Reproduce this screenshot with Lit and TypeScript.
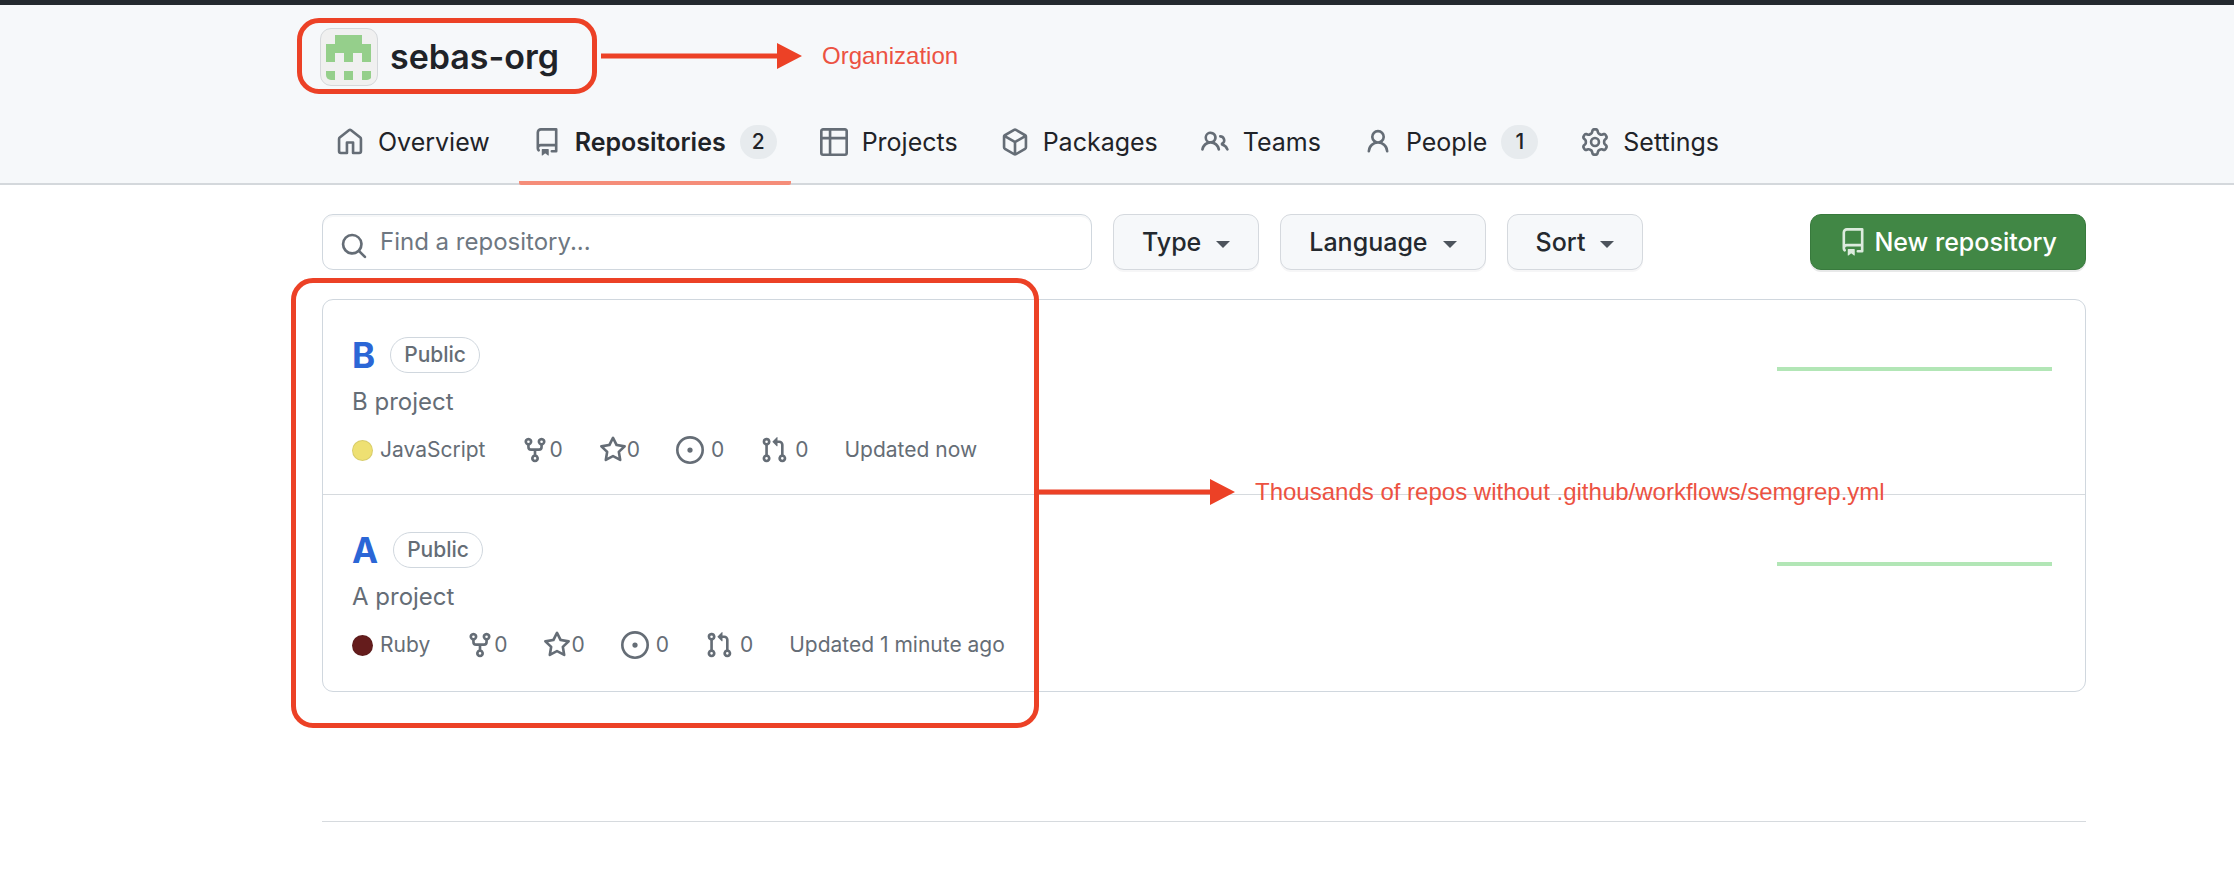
import { LitElement, html, css, svg } from "lit";
import { customElement, property } from "lit/decorators.js";

const ICONS: Record<string, string> = {
  home: "M6.906.664a1.749 1.749 0 0 1 2.187 0l5.25 4.2c.415.332.657.835.657 1.367v7.019A1.75 1.75 0 0 1 13.25 15h-3.5a.75.75 0 0 1-.75-.75V9H7v5.25a.75.75 0 0 1-.75.75h-3.5A1.75 1.75 0 0 1 1 13.25V6.23c0-.531.242-1.034.657-1.366l5.25-4.2Zm1.25 1.171a.25.25 0 0 0-.312 0l-5.25 4.2a.25.25 0 0 0-.094.196v7.019c0 .138.112.25.25.25H5.5V8.25a.75.75 0 0 1 .75-.75h3.5a.75.75 0 0 1 .75.75v5.25h2.75a.25.25 0 0 0 .25-.25V6.23a.25.25 0 0 0-.094-.195Z",
  repo: "M2 2.5A2.5 2.5 0 0 1 4.5 0h8.75a.75.75 0 0 1 .75.75v12.5a.75.75 0 0 1-.75.75h-2.5a.75.75 0 0 1 0-1.5h1.75v-2h-8a1 1 0 0 0-.714 1.7.75.75 0 1 1-1.072 1.05A2.495 2.495 0 0 1 2 11.5Zm10.5-1h-8a1 1 0 0 0-1 1v6.708A2.486 2.486 0 0 1 4.5 9h8ZM5 12.25a.25.25 0 0 1 .25-.25h3.5a.25.25 0 0 1 .25.25v3.25a.25.25 0 0 1-.4.2l-1.45-1.087a.249.249 0 0 0-.3 0L5.4 15.7a.25.25 0 0 1-.4-.2Z",
  table: "M0 1.75C0 .784.784 0 1.75 0h12.5C15.216 0 16 .784 16 1.75v12.5A1.75 1.75 0 0 1 14.25 16H1.75A1.75 1.75 0 0 1 0 14.25ZM6.5 6.5v8h7.75a.25.25 0 0 0 .25-.25V6.5Zm8-1.5V1.75a.25.25 0 0 0-.25-.25H6.5V5Zm-13 1.5v7.75c0 .138.112.25.25.25H5v-8ZM5 5V1.5H1.75a.25.25 0 0 0-.25.25V5Z",
  package: "m8.878.392 5.25 3.045c.54.314.872.89.872 1.514v6.098a1.75 1.75 0 0 1-.872 1.514l-5.25 3.045a1.75 1.75 0 0 1-1.756 0l-5.25-3.045A1.75 1.75 0 0 1 1 11.049V4.951c0-.624.332-1.201.872-1.514L7.122.392a1.75 1.75 0 0 1 1.756 0ZM7.875 1.69l-4.63 2.685L8 7.133l4.755-2.758-4.63-2.685a.248.248 0 0 0-.25 0ZM2.5 5.677v5.372c0 .09.047.171.125.216l4.625 2.683V8.432Zm6.25 8.271 4.625-2.683a.25.25 0 0 0 .125-.216V5.677L8.75 8.432Z",
  people: "M2 5.5a3.5 3.5 0 1 1 5.898 2.549 5.508 5.508 0 0 1 3.034 4.084.75.75 0 1 1-1.482.235 4 4 0 0 0-7.9 0 .75.75 0 0 1-1.482-.236A5.507 5.507 0 0 1 3.102 8.05 3.493 3.493 0 0 1 2 5.5ZM11 4a3.001 3.001 0 0 1 2.22 5.018 5.01 5.01 0 0 1 2.56 3.012.749.749 0 0 1-.885.954.752.752 0 0 1-.549-.514 3.507 3.507 0 0 0-2.522-2.372.75.75 0 0 1-.574-.73v-.352a.75.75 0 0 1 .416-.672A1.5 1.5 0 0 0 11 5.5.75.75 0 0 1 11 4Zm-5.5-.5a2 2 0 1 0-.001 3.999A2 2 0 0 0 5.5 3.5Z",
  person: "M10.561 8.073a6.005 6.005 0 0 1 3.432 5.142.75.75 0 1 1-1.498.07 4.5 4.5 0 0 0-8.99 0 .75.75 0 0 1-1.498-.07 6.004 6.004 0 0 1 3.431-5.142 3.999 3.999 0 1 1 5.123 0ZM10.5 5a2.5 2.5 0 1 0-5 0 2.5 2.5 0 0 0 5 0Z",
  gear: "M8 0a8.2 8.2 0 0 1 .701.031C9.444.095 9.99.645 10.16 1.29l.288 1.107c.018.066.079.158.212.224.231.114.454.243.668.386.123.082.233.09.299.071l1.103-.303c.644-.176 1.392.021 1.82.63.27.385.506.792.704 1.218.315.675.111 1.422-.364 1.891l-.814.806c-.049.048-.098.147-.088.294.016.257.016.515 0 .772-.01.147.038.246.088.294l.814.806c.475.469.679 1.216.364 1.891a7.977 7.977 0 0 1-.704 1.217c-.428.61-1.176.807-1.82.63l-1.102-.302c-.067-.019-.177-.011-.3.071a5.909 5.909 0 0 1-.668.386c-.133.066-.194.158-.211.224l-.29 1.106c-.168.646-.715 1.196-1.458 1.26a8.006 8.006 0 0 1-1.402 0c-.743-.064-1.289-.614-1.458-1.26l-.289-1.106c-.018-.066-.079-.158-.212-.224a5.738 5.738 0 0 1-.668-.386c-.123-.082-.233-.09-.299-.071l-1.103.303c-.644.176-1.392-.021-1.82-.63a8.12 8.12 0 0 1-.704-1.218c-.315-.675-.111-1.422.363-1.891l.815-.806c.05-.048.098-.147.088-.294a6.214 6.214 0 0 1 0-.772c.01-.147-.038-.246-.088-.294l-.815-.806C.635 6.045.431 5.298.746 4.623a7.92 7.92 0 0 1 .704-1.217c.428-.61 1.176-.807 1.82-.63l1.102.302c.067.019.177.011.3-.071.214-.143.437-.272.668-.386.133-.066.194-.158.211-.224l.29-1.106C6.009.645 6.556.095 7.299.03 7.53.01 7.764 0 8 0Zm-.571 1.525c-.036.003-.108.036-.137.146l-.289 1.105c-.147.561-.549.967-.998 1.189-.173.086-.34.183-.5.29-.417.278-.97.423-1.529.27l-1.103-.303c-.109-.03-.175.016-.195.045-.22.312-.412.644-.573.99-.014.031-.021.11.059.19l.815.806c.411.406.562.957.53 1.456a4.709 4.709 0 0 0 0 .582c.032.499-.119 1.05-.53 1.456l-.815.806c-.081.08-.073.159-.059.19.162.346.353.677.573.989.02.03.085.076.195.046l1.102-.303c.56-.153 1.113-.008 1.53.27.161.107.328.204.501.29.447.222.85.629.997 1.189l.289 1.105c.029.109.101.143.137.146a6.6 6.6 0 0 0 1.142 0c.036-.003.108-.036.137-.146l.289-1.105c.147-.561.549-.967.998-1.189.173-.086.34-.183.5-.29.417-.278.97-.423 1.529-.27l1.103.303c.109.029.175-.016.195-.045.22-.313.411-.644.573-.99.014-.031.021-.11-.059-.19l-.815-.806c-.411-.406-.562-.957-.53-1.456a4.709 4.709 0 0 0 0-.582c-.032-.499.119-1.05.53-1.456l.815-.806c.081-.08.073-.159.059-.19a6.464 6.464 0 0 0-.573-.989c-.02-.03-.085-.076-.195-.046l-1.102.303c-.56.153-1.113.008-1.53-.27a4.44 4.44 0 0 0-.501-.29c-.447-.222-.85-.629-.997-1.189l-.289-1.105c-.029-.11-.101-.143-.137-.146a6.6 6.6 0 0 0-1.142 0ZM11 8a3 3 0 1 1-6 0 3 3 0 0 1 6 0ZM9.5 8a1.5 1.5 0 1 0-3.001.001A1.5 1.5 0 0 0 9.5 8Z",
  search: "M10.68 11.74a6 6 0 0 1-7.922-8.982 6 6 0 0 1 8.982 7.922l3.04 3.04a.749.749 0 0 1-.326 1.275.749.749 0 0 1-.734-.215ZM11.5 7a4.499 4.499 0 1 0-8.997 0A4.499 4.499 0 0 0 11.5 7Z",
  fork: "M5 5.372v.878c0 .414.336.75.75.75h4.5a.75.75 0 0 0 .75-.75v-.878a2.25 2.25 0 1 1 1.5 0v.878a2.25 2.25 0 0 1-2.25 2.25h-1.5v2.128a2.251 2.251 0 1 1-1.5 0V8.5h-1.5A2.25 2.25 0 0 1 3.5 6.25v-.878a2.25 2.25 0 1 1 1.5 0ZM5 3.25a.75.75 0 1 0-1.5 0 .75.75 0 0 0 1.5 0Zm6.75.75a.75.75 0 1 0 0-1.5.75.75 0 0 0 0 1.5Zm-3 8.75a.75.75 0 1 0-1.5 0 .75.75 0 0 0 1.5 0Z",
  star: "M8 .25a.75.75 0 0 1 .673.418l1.882 3.815 4.21.612a.75.75 0 0 1 .416 1.279l-3.046 2.97.719 4.192a.751.751 0 0 1-1.088.791L8 12.347l-3.766 1.98a.75.75 0 0 1-1.088-.79l.72-4.194L.818 6.374a.75.75 0 0 1 .416-1.28l4.21-.611L7.327.668A.75.75 0 0 1 8 .25Zm0 2.445L6.615 5.5a.75.75 0 0 1-.564.41l-3.097.45 2.24 2.184a.75.75 0 0 1 .216.664l-.528 3.084 2.769-1.456a.75.75 0 0 1 .698 0l2.77 1.456-.53-3.084a.75.75 0 0 1 .216-.664l2.24-2.183-3.096-.45a.75.75 0 0 1-.564-.41L8 2.694Z",
  issue: "M8 9.5a1.5 1.5 0 1 0 0-3 1.5 1.5 0 0 0 0 3ZM8 0a8 8 0 1 1 0 16A8 8 0 0 1 8 0ZM1.5 8a6.5 6.5 0 1 0 13 0 6.5 6.5 0 0 0-13 0Z",
  pull: "M1.5 3.25a2.25 2.25 0 1 1 3 2.122v5.256a2.251 2.251 0 1 1-1.5 0V5.372A2.25 2.25 0 0 1 1.5 3.25Zm5.677-.177L9.573.677A.25.25 0 0 1 10 .854V2.5h1A2.5 2.5 0 0 1 13.5 5v5.628a2.251 2.251 0 1 1-1.5 0V5a1 1 0 0 0-1-1h-1v1.646a.25.25 0 0 1-.427.177L7.177 3.427a.25.25 0 0 1 0-.354ZM3.75 2.5a.75.75 0 1 0 0 1.5.75.75 0 0 0 0-1.5Zm0 9.5a.75.75 0 1 0 0 1.5.75.75 0 0 0 0-1.5Zm8.25.75a.75.75 0 1 0 1.5 0 .75.75 0 0 0-1.5 0Z",
};

const icon = (name: string) => html`<svg class="icon" viewBox="0 0 16 16" aria-hidden="true">
  <path fill-rule="evenodd" d=${ICONS[name]}></path>
</svg>`;

interface Tab {
  icon: string;
  label: string;
  count?: number;
  current?: boolean;
}

interface Repo {
  name: string;
  description: string;
  language: string;
  color: string;
  updated: string;
}

const TABS: Tab[] = [
  { icon: "home", label: "Overview" },
  { icon: "repo", label: "Repositories", count: 2, current: true },
  { icon: "table", label: "Projects" },
  { icon: "package", label: "Packages" },
  { icon: "people", label: "Teams" },
  { icon: "person", label: "People", count: 1 },
  { icon: "gear", label: "Settings" },
];

const REPOS: Repo[] = [
  { name: "B", description: "B project", language: "JavaScript", color: "#eee072", updated: "Updated now" },
  { name: "A", description: "A project", language: "Ruby", color: "#651c1c", updated: "Updated 1 minute ago" },
];

const AVATAR_CELLS = [
  [1, 0], [2, 0], [3, 0],
  [0, 1], [1, 1], [2, 1], [3, 1], [4, 1],
  [0, 2], [2, 2], [4, 2],
  [0, 4], [2, 4], [4, 4],
];

const base = css`
  * { box-sizing: border-box; }
  a { color: inherit; text-decoration: none; }
  .icon { width: 28px; height: 28px; flex: none; display: block; fill: currentColor; }
`;

@customElement("org-header")
class OrgHeader extends LitElement {
  static styles = [base, css`
    :host {
      display: block;
      background: #f6f8fa;
      border-top: 5px solid #24292f;
      border-bottom: 2px solid #d4d8dc;
      padding: 23px 148px 0 322px;
    }
    .org { display: flex; align-items: center; gap: 12px; margin-left: -2px; }
    .avatar {
      width: 58px;
      height: 58px;
      padding: 5px;
      border: 1px solid #d5d8db;
      border-radius: 11px;
      background: #f0f0f0;
      fill: #95cf8b;
    }
    h1 { margin: 0; font-size: 34px; line-height: 44px; font-weight: 600; color: #1f2328; }
    .tabs { display: flex; gap: 15px; margin: 18px 0 -2px; }
    .tab {
      display: flex;
      align-items: center;
      gap: 14px;
      padding: 21px 14px 22px;
      border-bottom: 4px solid transparent;
      border-radius: 2px;
      font-size: 25px;
      line-height: 34px;
      color: #1f2328;
    }
    .tab .icon { color: #656d76; }
    .current { font-weight: 600; border-bottom-color: #f58d79; }
    .count {
      min-width: 37px;
      height: 34px;
      padding: 0 11px;
      border-radius: 18px;
      background: #e7ebee;
      font-size: 21px;
      font-weight: 500;
      text-align: center;
    }
  `];

  render() {
    return html`
      <div class="org">
        <svg class="avatar" viewBox="0 0 46 46" aria-hidden="true" shape-rendering="crispEdges">
          ${AVATAR_CELLS.map(([x, y]) => svg`<rect x=${x * 9} y=${y * 9 + 1} width="9" height="9"></rect>`)}
        </svg>
        <h1>sebas-org</h1>
      </div>
      <nav class="tabs" aria-label="Organization">
        ${TABS.map((t) => html`
          <a class="tab ${t.current ? "current" : ""}" href="#">
            ${icon(t.icon)}<span>${t.label}</span>
            ${t.count ? html`<span class="count">${t.count}</span>` : ""}
          </a>`)}
      </nav>
    `;
  }
}

@customElement("repo-toolbar")
class RepoToolbar extends LitElement {
  static styles = [base, css`
    :host { display: flex; gap: 21px; }
    .search {
      flex: 0 1 770px;
      min-width: 0;
      display: flex;
      align-items: center;
      gap: 12px;
      height: 56px;
      padding: 0 17px;
      border: 1px solid #d0d7de;
      border-radius: 11px;
      box-shadow: inset 0 2px 0 rgba(208, 215, 222, 0.2);
      color: #656d76;
    }
    .glass { padding-top: 8px; }
    input {
      flex: 1;
      min-width: 0;
      padding: 0;
      border: 0;
      outline: 0;
      background: none;
      font: inherit;
      color: #1f2328;
    }
    input::placeholder { color: #6e7781; opacity: 1; }
    button {
      display: flex;
      align-items: center;
      gap: 15px;
      height: 56px;
      padding: 0 28px;
      border: 1px solid #d5d9de;
      border-radius: 11px;
      background: #f6f8fa;
      box-shadow: 0 2px 0 rgba(31, 35, 40, 0.04);
      font: inherit;
      font-size: 25px;
      font-weight: 500;
      white-space: nowrap;
      color: #24292f;
    }
    .caret {
      border: 7px solid transparent;
      border-top-color: #4d545c;
      border-bottom: 0;
      margin-top: 4px;
    }
    .primary {
      margin-left: auto;
      gap: 7px;
      background: #418745;
      border-color: #387a3d;
      box-shadow: 0 2px 0 rgba(31, 35, 40, 0.1);
      color: #ffffff;
    }
    .primary .icon { color: #dcebdd; }
  `];

  render() {
    return html`
      <div class="search">
        <label class="glass" for="find" aria-label="Find a repository">${icon("search")}</label>
        <input id="find" type="text" placeholder="Find a repository..." />
      </div>
      ${["Type", "Language", "Sort"].map((l) => html`
        <button type="button" aria-haspopup="menu">${l}<span class="caret"></span></button>`)}
      <button type="button" class="primary">${icon("repo")}New repository</button>
    `;
  }
}

@customElement("repo-row")
class RepoRow extends LitElement {
  @property({ attribute: false }) repo!: Repo;

  static styles = [base, css`
    :host {
      display: flex;
      justify-content: space-between;
      padding: 37px 33px 30px 29px;
      color: #656d76;
    }
    .head { display: flex; align-items: center; gap: 15px; height: 36px; }
    h3 { margin: 0; font-size: 35px; line-height: 36px; font-weight: 700; color: #2b66d6; }
    .pill {
      padding: 0 13px;
      border: 1px solid #d0d7de;
      border-radius: 18px;
      font-size: 21px;
      line-height: 34px;
      font-weight: 500;
    }
    p { margin: 13px 0 18px; line-height: 32px; }
    .meta { display: flex; align-items: center; gap: 36px; font-size: 21px; line-height: 28px; }
    .stat, .language { display: flex; align-items: center; white-space: nowrap; }
    .language { gap: 7px; }
    .wide { gap: 7px; }
    .dot { width: 21px; height: 21px; border-radius: 50%; border: 1px solid rgba(31, 35, 40, 0.1); }
    .spark { flex: none; width: 275px; height: 4px; margin-top: 30px; background: #b2e6b6; }
  `];

  render() {
    const r = this.repo;
    return html`
      <div>
        <div class="head"><h3><a href="#">${r.name}</a></h3><span class="pill">Public</span></div>
        <p>${r.description}</p>
        <div class="meta">
          <span class="language"><span class="dot" style="background:${r.color}"></span>${r.language}</span>
          <a class="stat" href="#">${icon("fork")}0</a>
          <a class="stat" href="#">${icon("star")}0</a>
          <a class="stat wide" href="#">${icon("issue")}0</a>
          <a class="stat wide" href="#">${icon("pull")}0</a>
          <span>${r.updated}</span>
        </div>
      </div>
      <div class="spark"></div>
    `;
  }
}

@customElement("callout-note")
class CalloutNote extends LitElement {
  @property() text = "";

  static styles = [base, css`
    :host {
      display: flex;
      align-items: center;
      font: 24px/28px "Liberation Sans", Arial, sans-serif;
      color: #ec5242;
      white-space: nowrap;
    }
    .arrow { display: block; width: 201px; height: 26px; margin-right: 20px; fill: #ec4126; }
  `];

  render() {
    return html`
      <svg class="arrow" viewBox="0 0 201 26" aria-hidden="true">
        <path d="M0 10.500H176V0L201 13L176 26V15.500H0Z"></path>
      </svg>
      <span>${this.text}</span>
    `;
  }
}

@customElement("app-root")
class AppRoot extends LitElement {
  static styles = [base, css`
    :host {
      display: block;
      position: relative;
      min-height: 100vh;
      background: #ffffff;
      font: 24px/32px Inter, "Liberation Sans", sans-serif;
      color: #1f2328;
    }
    main { padding: 29px 148px 0 322px; }
    .list { margin-top: 29px; padding-bottom: 2px; border: 1px solid #d0d7de; border-radius: 11px; }
    repo-row + repo-row { border-top: 1px solid #d6dade; }
    hr { margin: 129px 0 0; border: 0; border-top: 1px solid #d6dade; }
    .frame { position: absolute; border: 5px solid #ec4126; border-radius: 22px; pointer-events: none; }
    .org-frame { left: 297px; top: 18px; width: 300px; height: 76px; }
    .list-frame { left: 291px; top: 278px; width: 748px; height: 450px; }
    callout-note { position: absolute; }
    .org-note { left: 601px; top: 42px; }
    .list-note { left: 1034px; top: 478px; }
  `];

  render() {
    return html`
      <org-header></org-header>
      <main>
        <repo-toolbar></repo-toolbar>
        <div class="list">${REPOS.map((r) => html`<repo-row .repo=${r}></repo-row>`)}</div>
        <hr />
      </main>
      <div class="frame org-frame"></div>
      <callout-note class="org-note" text="Organization"></callout-note>
      <div class="frame list-frame"></div>
      <callout-note class="list-note" text="Thousands of repos without .github/workflows/semgrep.yml"></callout-note>
    `;
  }
}
